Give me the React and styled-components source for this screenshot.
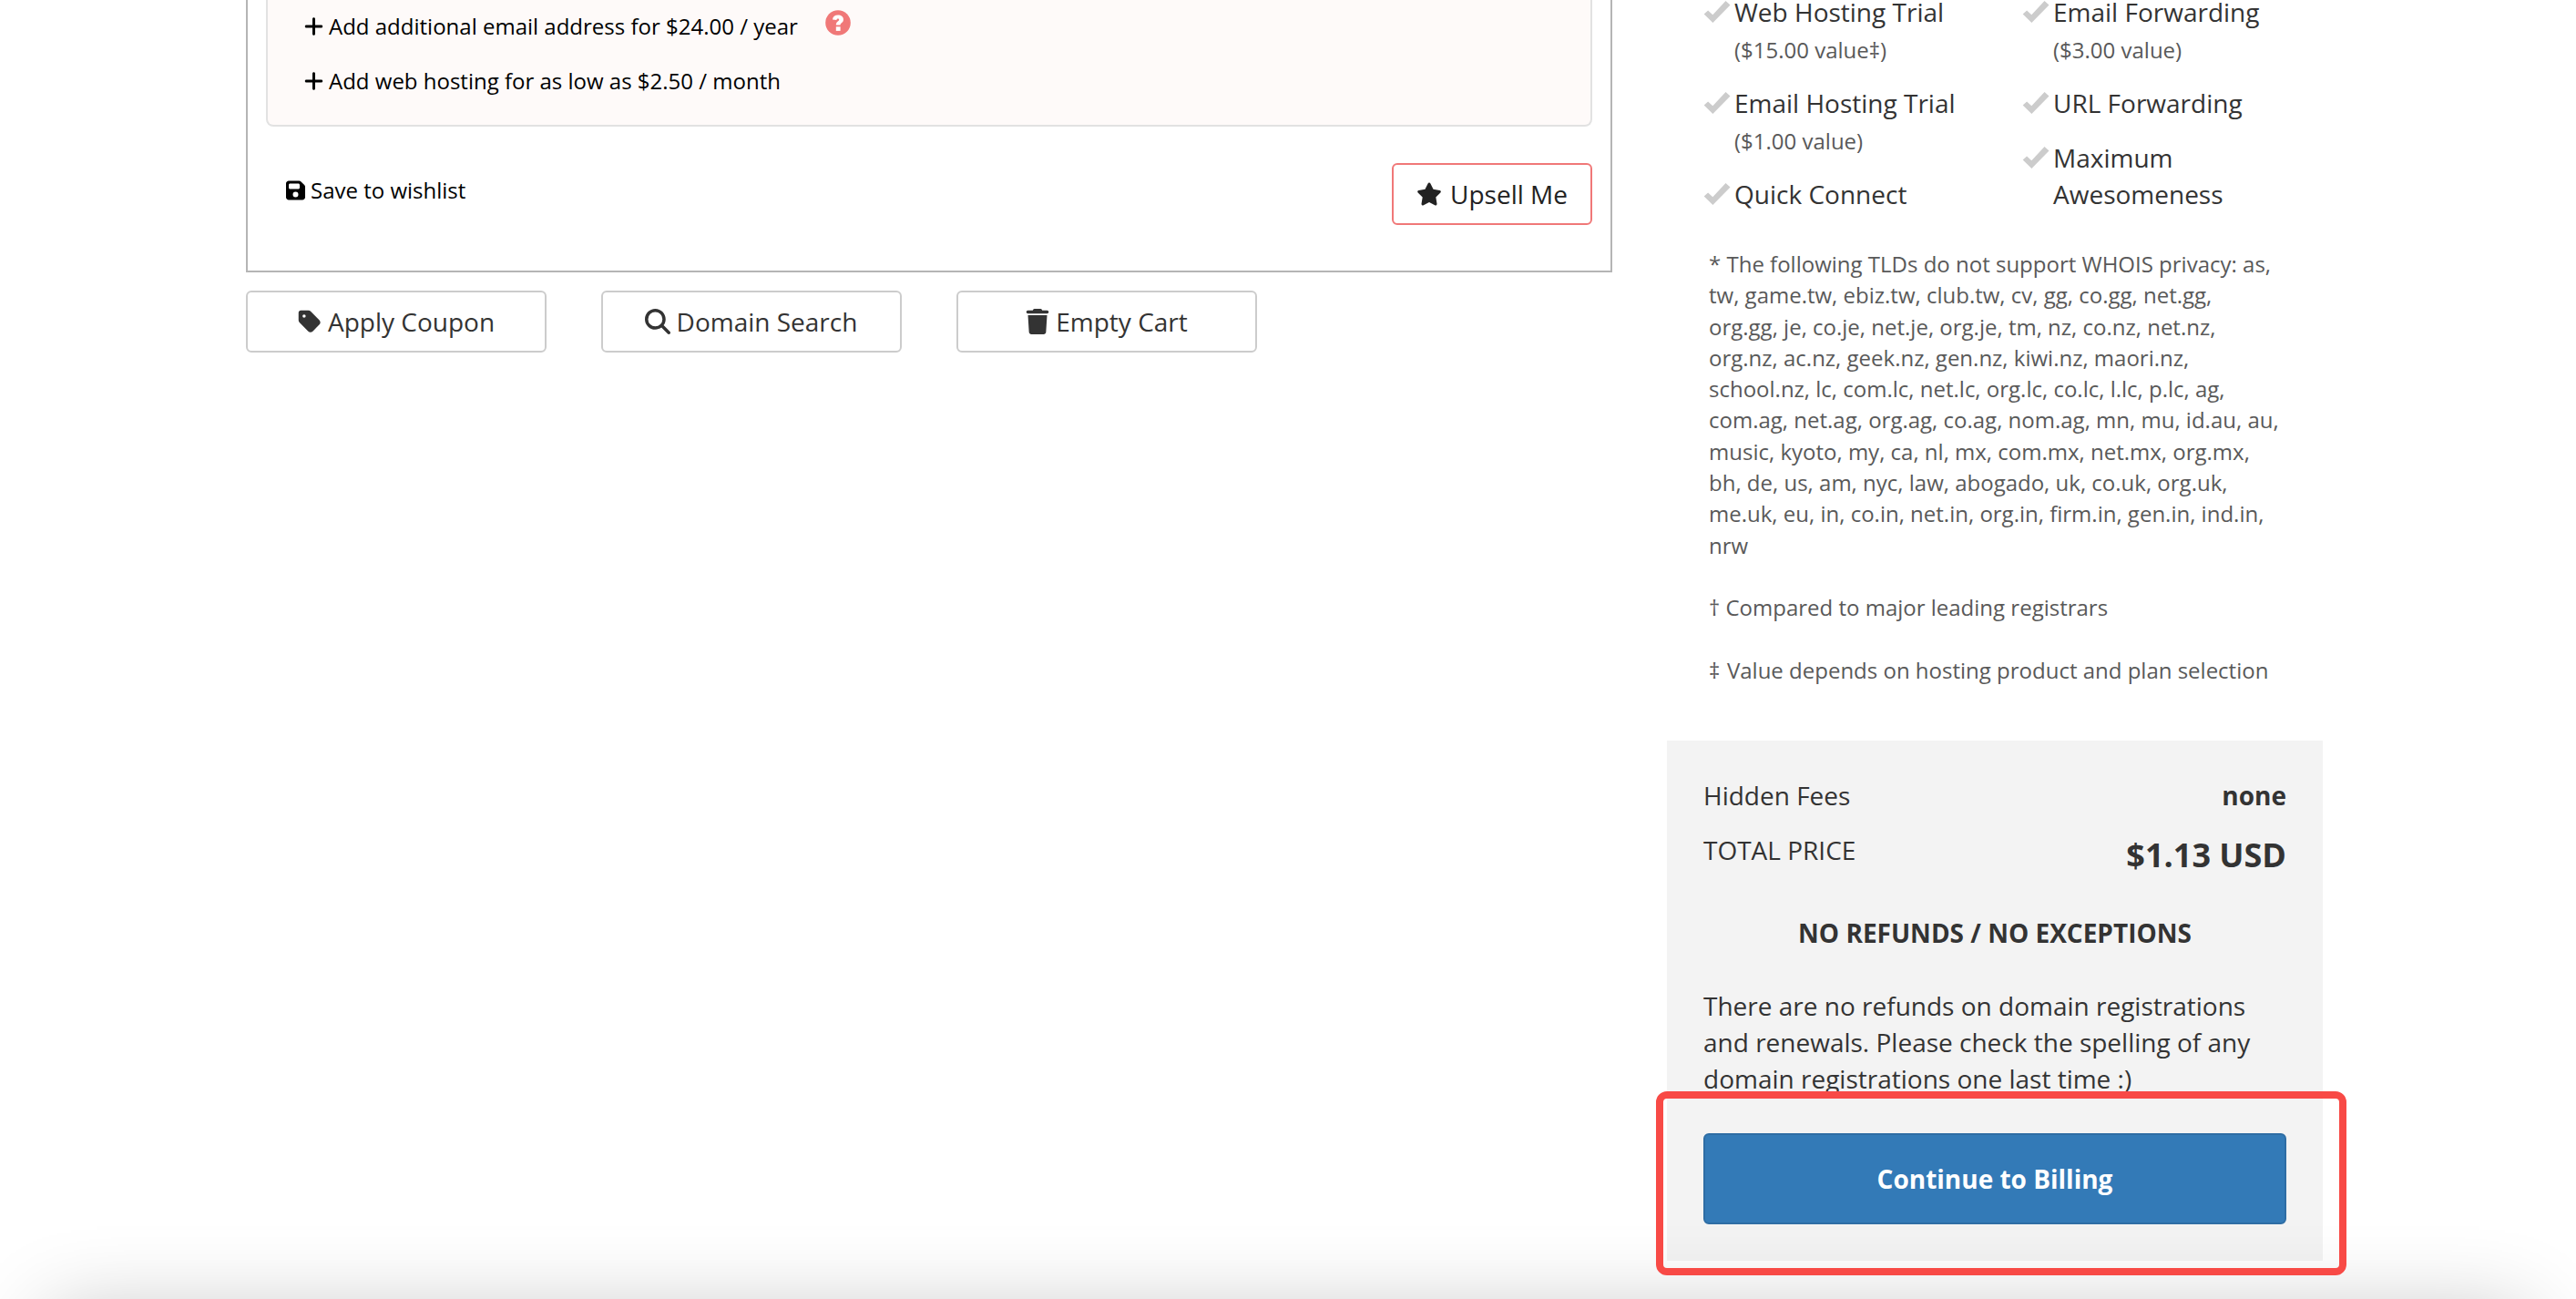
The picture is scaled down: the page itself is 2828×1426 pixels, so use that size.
import styled, { createGlobalStyle } from "styled-components";
import {
  FaPlus,
  FaFloppyDisk,
  FaStar,
  FaTag,
  FaMagnifyingGlass,
  FaTrash,
} from "react-icons/fa6";

const GlobalStyle = createGlobalStyle`
  * { box-sizing: border-box; }

  body {
    margin: 0;
    background: #fff;
    color: #333;
    font-family: "Open Sans", "Noto Sans", sans-serif;
    font-size: 28px;
    line-height: 40px;
  }
`;

const Page = styled.div`
  position: relative;
  width: 2828px;
  height: 1426px;
  padding-left: 270px;
  overflow: hidden;
  display: flex;
  gap: 60px;
`;

// Left column
const CartColumn = styled.main`
  width: 1500px;
`;

const CartItem = styled.section`
  height: 299px;
  padding: 0 20px;
  border: 2px solid #b5b5b5;
  border-top: 0;
`;

const Extras = styled.div`
  height: 139px;
  padding: 9px 38px 0 40px;
  background: #fefaf9;
  border: 2px solid #e2e2e2;
  border-top: 0;
  border-radius: 0 0 8px 8px;
`;

const ExtraLine = styled.div`
  height: 40px;
  margin-bottom: 20px;
  display: flex;
  align-items: center;
  font-size: 24px;
  color: #000;

  .help {
    margin: -8px 0 0 30px;
  }
`;

const ExtraIcon = styled(FaPlus)`
  width: 21px;
  height: 24px;
  margin-right: 6px;
`;

const ItemFooter = styled.div`
  display: flex;
  justify-content: space-between;
  padding: 40px 0 0 22px;
`;

const Wishlist = styled.a`
  display: flex;
  align-items: center;
  height: 40px;
  margin-top: 10px;
  font-size: 24px;
  color: #000;

  svg {
    width: 21px;
    height: 24px;
    margin-right: 6px;
  }
`;

const Button = styled.button`
  width: ${({ $width }) => $width || "330px"};
  height: 68px;
  padding: 0;
  display: flex;
  align-items: center;
  justify-content: center;
  gap: ${({ $gap }) => $gap || "7px"};
  background: #fff;
  border: 2px solid ${({ $accent }) => ($accent ? "#f07878" : "#ccc")};
  border-radius: 6px;
  color: ${({ $accent }) => ($accent ? "#222" : "#333")};
  font: inherit;

  svg {
    width: auto;
    height: 28px;
  }
`;

const CartActions = styled.div`
  display: flex;
  gap: 60px;
  margin-top: 20px;

  ${Button} {
    padding-right: 1px;
  }
`;

// Right column
const Sidebar = styled.aside`
  width: 720px;
`;

const Features = styled.div`
  height: 254px;
  padding-left: 40px;
  display: flex;
`;

const FeatureList = styled.ul`
  flex: none;
  width: ${({ $width }) => $width};
  margin: -7px 0 0;
  padding: 0;
  list-style: none;
`;

const Feature = styled.li`
  display: flex;
  margin-bottom: 20px;
  color: #333;

  svg {
    flex: none;
    margin: 7px 4px 0 0;
  }

  small {
    font-size: 24px;
    line-height: 1;
    color: #595959;
  }
`;

const Notes = styled.div`
  width: 628px;
  margin: 19px 0 0 46px;
  height: 540px;
  font-size: 24px;
  line-height: 34.28px;
  color: #595959;

  p {
    margin: 0 0 34.28px;
  }
`;

const Mark = styled.span`
  margin-right: 1.5px;
`;

const Summary = styled.section`
  width: 720px;
  height: 571px;
  padding: 40px;
  background: #f3f3f3;
`;

const SummaryRow = styled.div`
  height: 60px;
  display: flex;
  justify-content: space-between;
`;

const Total = styled.strong`
  font-size: 36px;
  line-height: 52px;
`;

const RefundTitle = styled.h4`
  margin: 31px 0 40px;
  font-size: 28px;
  line-height: 40px;
  text-align: center;
`;

const RefundText = styled.p`
  width: 640px;
  height: 120px;
  margin: 0 0 40px;
`;

const BillingButton = styled.button`
  display: block;
  width: 640px;
  height: 100px;
  background: #337ab7;
  border: 2px solid #2e6da4;
  border-radius: 6px;
  color: #fff;
  font: inherit;
  font-weight: 700;
`;

// Red frame drawn over the billing button
const Highlight = styled.div`
  position: absolute;
  left: 1818px;
  top: 1198px;
  width: 758px;
  height: 202px;
  border: 8px solid #f84a46;
  border-radius: 12px;
`;

// Soft shadow coming up from below the window
const BottomShade = styled.div`
  position: absolute;
  left: 54px;
  right: 54px;
  top: 1442px;
  height: 300px;
  box-shadow: 0 0 88px rgba(0, 0, 0, 0.24);
`;

const CheckIcon = () => (
  <svg width="30" height="26" viewBox="0 0 30 26" fill="#ccc">
    <path d="M0.7 15.4 L5.1 11.4 L10.3 16.2 L24.5 0.9 L29.5 5.4 L10.4 25.1 Z" />
  </svg>
);

const HelpIcon = () => (
  <svg className="help" width="28" height="28" viewBox="0 0 28 28">
    <circle cx="14" cy="14" r="13.8" fill="#f07878" />
    <path
      d="M8 10.6c.3-3.4 2.5-5 6-5 3.4 0 5.9 1.6 5.9 4.9 0 3.6-3.4 3.7-3.4 6h-4.7c0-4 3.4-3.9 3.4-5.7 0-.9-.5-1.3-1.3-1.3-.9 0-1.4.5-1.5 1.5z"
      fill="#fff"
    />
    <path d="M11.8 18.3h4.8v4.6h-4.8z" fill="#fff" />
  </svg>
);

const featureColumns = [
  {
    width: "350px",
    items: [
      { name: "Web Hosting Trial", value: "($15.00 value‡)" },
      { name: "Email Hosting Trial", value: "($1.00 value)" },
      { name: "Quick Connect" },
    ],
  },
  {
    width: "320px",
    items: [
      { name: "Email Forwarding", value: "($3.00 value)" },
      { name: "URL Forwarding" },
      { name: "Maximum Awesomeness" },
    ],
  },
];

const tlds =
  "as, tw, game.tw, ebiz.tw, club.tw, cv, gg, co.gg, net.gg, org.gg, je, co.je, net.je, org.je, tm, nz, co.nz, net.nz, org.nz, ac.nz, geek.nz, gen.nz, kiwi.nz, maori.nz, school.nz, lc, com.lc, net.lc, org.lc, co.lc, l.lc, p.lc, ag, com.ag, net.ag, org.ag, co.ag, nom.ag, mn, mu, id.au, au, music, kyoto, my, ca, nl, mx, com.mx, net.mx, org.mx, bh, de, us, am, nyc, law, abogado, uk, co.uk, org.uk, me.uk, eu, in, co.in, net.in, org.in, firm.in, gen.in, ind.in, nrw";

export default function App() {
  return (
    <>
      <GlobalStyle />
      <Page>
        <CartColumn>
          <CartItem>
            <Extras>
              <ExtraLine>
                <ExtraIcon />
                Add additional email address for $24.00 / year
                <HelpIcon />
              </ExtraLine>
              <ExtraLine>
                <ExtraIcon />
                Add web hosting for as low as $2.50 / month
              </ExtraLine>
            </Extras>
            <ItemFooter>
              <Wishlist>
                <FaFloppyDisk />
                Save to wishlist
              </Wishlist>
              <Button $accent $width="220px" $gap="9px">
                <FaStar />
                Upsell Me
              </Button>
            </ItemFooter>
          </CartItem>
          <CartActions>
            <Button $gap="6px">
              <FaTag />
              Apply Coupon
            </Button>
            <Button>
              <FaMagnifyingGlass />
              Domain Search
            </Button>
            <Button $gap="6px">
              <FaTrash />
              Empty Cart
            </Button>
          </CartActions>
        </CartColumn>

        <Sidebar>
          <Features>
            {featureColumns.map((column, i) => (
              <FeatureList key={i} $width={column.width}>
                {column.items.map((feature) => (
                  <Feature key={feature.name}>
                    <CheckIcon />
                    <div>
                      {feature.name}
                      {feature.value && (
                        <>
                          <br />
                          <small>{feature.value}</small>
                        </>
                      )}
                    </div>
                  </Feature>
                ))}
              </FeatureList>
            ))}
          </Features>
          <Notes>
            <p>* The following TLDs do not support WHOIS privacy: {tlds}</p>
            <p>† Compared to major leading registrars</p>
            <p>
              <Mark>‡</Mark> Value depends on hosting product and plan selection
            </p>
          </Notes>
          <Summary>
            <SummaryRow>
              <span>Hidden Fees</span>
              <strong>none</strong>
            </SummaryRow>
            <SummaryRow>
              <span>TOTAL PRICE</span>
              <Total>$1.13 USD</Total>
            </SummaryRow>
            <RefundTitle>NO REFUNDS / NO EXCEPTIONS</RefundTitle>
            <RefundText>
              There are no refunds on domain registrations and renewals. Please
              check the spelling of any domain registrations one last time :)
            </RefundText>
            <BillingButton>Continue to Billing</BillingButton>
          </Summary>
        </Sidebar>
        <BottomShade />
        <Highlight />
      </Page>
    </>
  );
}
